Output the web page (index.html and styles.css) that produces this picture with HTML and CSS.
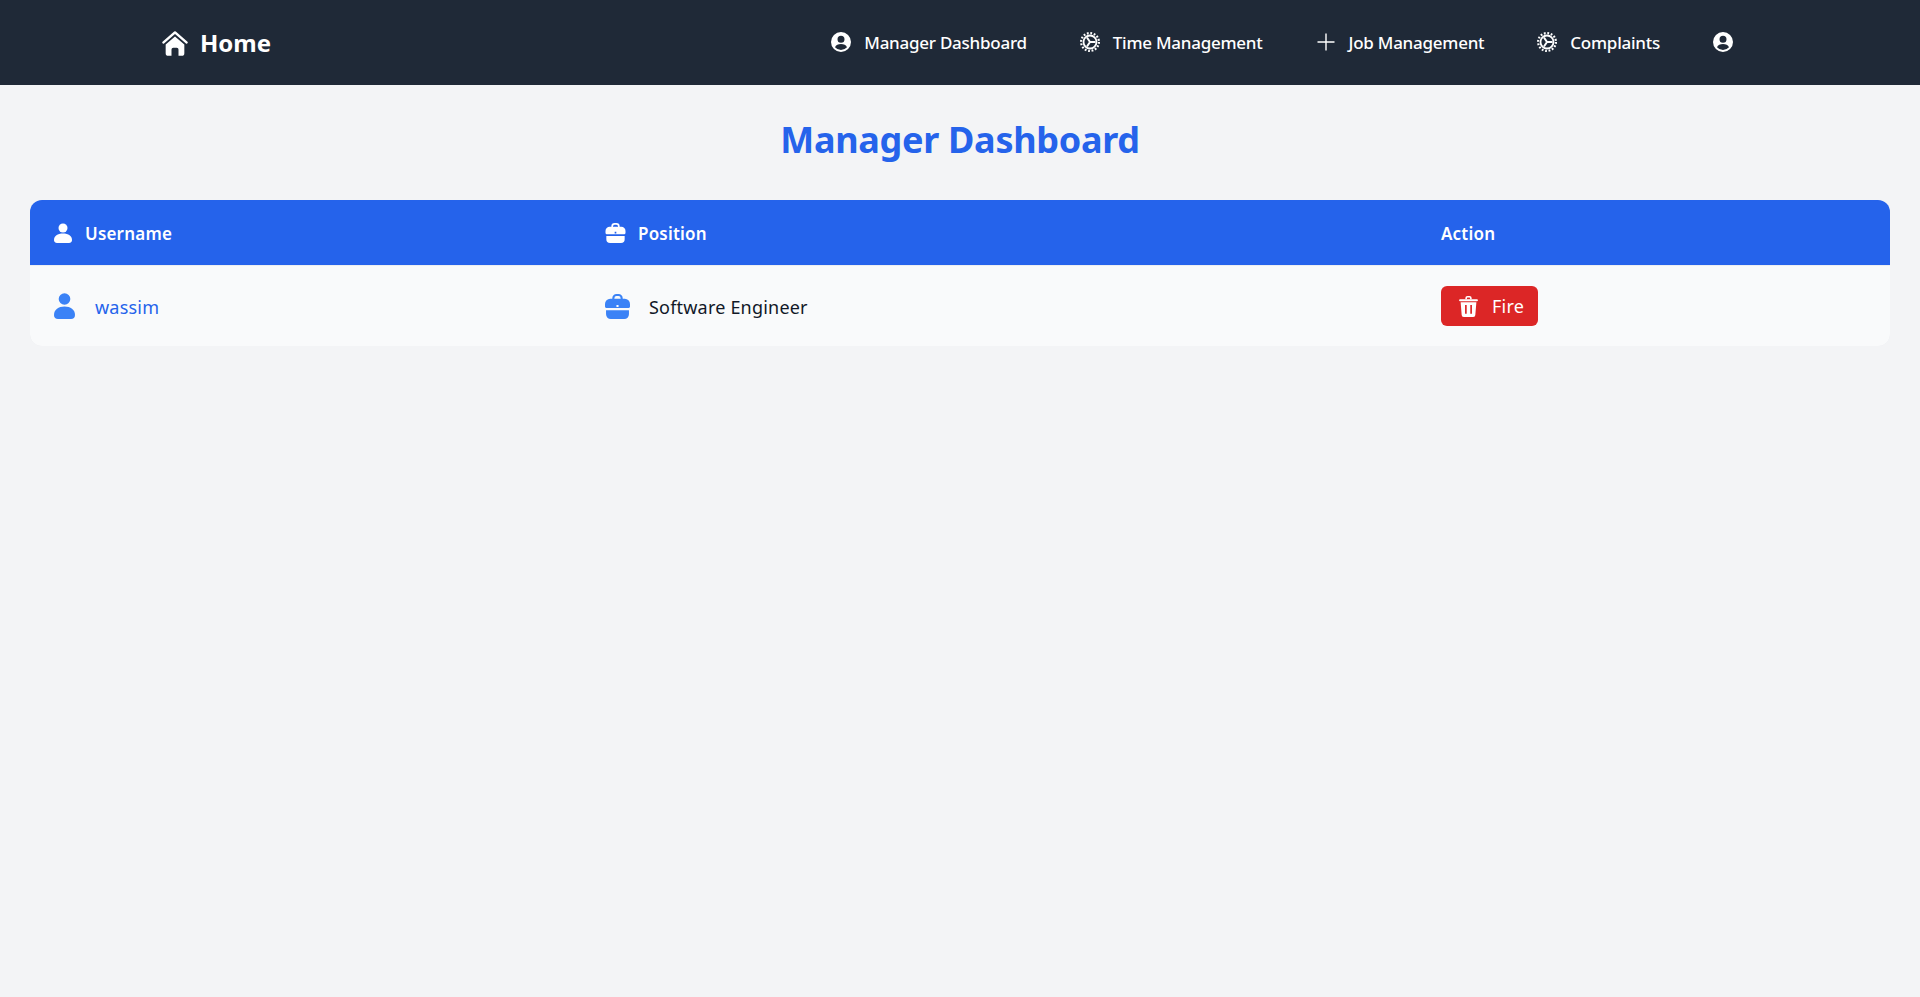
FILE: index.html
```html
<!DOCTYPE html>
<html lang="en">
<head>
    <meta charset="UTF-8">
    <meta name="viewport" content="width=device-width, initial-scale=1.0">
    <title>Manager Dashboard</title>
    <link rel="stylesheet" href="styles.css">
</head>
<body>
    <nav class="navbar">
        <a class="brand" href="#">
            <svg class="brand-icon" viewBox="0 0 24 22"><path d="M12 3.200 2.600 11.400a1 1 0 0 1-1.300-1.500L11.300 1.200a1 1 0 0 1 1.400 0l10 8.700a1 1 0 0 1-1.300 1.500z"/><path d="M12 5.400 4 12.300v7.400A2.300 2.300 0 0 0 6.300 22H9v-5.500a1.500 1.500 0 0 1 1.500-1.500h3a1.500 1.500 0 0 1 1.500 1.500V22h2.700A2.300 2.300 0 0 0 20 19.700v-7.400z"/></svg>
            <span>Home</span>
        </a>
        <div class="nav-links">
            <a class="nav-link" href="#">
                <svg class="nav-icon" viewBox="0 0 20 20"><path fill-rule="evenodd" d="M10 0a10 10 0 1 0 0 20 10 10 0 0 0 0-20zm0 3.800a3.500 3.500 0 1 1 0 7 3.500 3.500 0 0 1 0-7zM4 15.200c.9-2 3.200-3.200 6-3.200s5.100 1.200 6 3.200a8 8 0 0 1-12 0z"/></svg>
                <span>Manager Dashboard</span>
            </a>
            <a class="nav-link" href="#">
                <svg class="nav-icon" viewBox="0 0 20 20"><circle class="gear-teeth" cx="10" cy="10" r="8.900"/><circle class="gear-ring" cx="10" cy="10" r="6.500"/><path class="gear-spoke" d="M10 10h5.500M10 10 7 5.500M10 10l-3 4.500"/></svg>
                <span>Time Management</span>
            </a>
            <a class="nav-link" href="#">
                <svg class="nav-icon" viewBox="0 0 20 20"><path class="plus" d="M10 1.500v17M1.500 10h17"/></svg>
                <span>Job Management</span>
            </a>
            <a class="nav-link" href="#">
                <svg class="nav-icon" viewBox="0 0 20 20"><circle class="gear-teeth" cx="10" cy="10" r="8.900"/><circle class="gear-ring" cx="10" cy="10" r="6.500"/><path class="gear-spoke" d="M10 10h5.500M10 10 7 5.500M10 10l-3 4.500"/></svg>
                <span>Complaints</span>
            </a>
            <a class="nav-link" href="#">
                <svg class="nav-icon" viewBox="0 0 20 20"><path fill-rule="evenodd" d="M10 0a10 10 0 1 0 0 20 10 10 0 0 0 0-20zm0 3.800a3.500 3.500 0 1 1 0 7 3.500 3.500 0 0 1 0-7zM4 15.200c.9-2 3.200-3.200 6-3.200s5.100 1.200 6 3.200a8 8 0 0 1-12 0z"/></svg>
            </a>
        </div>
    </nav>

    <main class="content">
        <h1 class="page-title">Manager Dashboard</h1>
        <table class="staff-table">
            <colgroup>
                <col class="col-user">
                <col class="col-position">
                <col class="col-action">
            </colgroup>
            <thead>
                <tr>
                    <th>
                        <span class="cell-head">
                            <svg class="head-icon" viewBox="0 0 18 20"><circle cx="9" cy="5" r="4.500"/><path d="M0 17c0-4 3.500-6.500 9-6.500s9 2.500 9 6.500c0 1.600-1 3-3 3H3c-2 0-3-1.400-3-3z"/></svg>
                            Username
                        </span>
                    </th>
                    <th>
                        <span class="cell-head">
                            <svg class="head-icon head-icon-case" viewBox="0 0 24 24"><path d="M7 5V4a4 4 0 0 1 4-4h2a4 4 0 0 1 4 4v1h-2V4a2 2 0 0 0-2-2h-2a2 2 0 0 0-2 2v1z"/><path fill-rule="evenodd" d="M5 4.500h14a5 5 0 0 1 5 5V12c0 1-1 1.500-2 1.500H2c-1 0-2-.5-2-1.500V9.500a5 5 0 0 1 5-5zM11 10.500v2h2v-2z"/><path d="M1 15.500h22v4a4.500 4.500 0 0 1-4.500 4.500h-13A4.500 4.500 0 0 1 1 19.500z"/></svg>
                            Position
                        </span>
                    </th>
                    <th>Action</th>
                </tr>
            </thead>
            <tbody>
                <tr>
                    <td>
                        <a class="cell-body user-link" href="#">
                            <svg class="row-icon" viewBox="0 0 21 26"><circle cx="10.500" cy="6" r="5.800"/><path d="M0 22c0-5.500 4.500-8.500 10.500-8.500S21 16.500 21 22c0 2.500-1.500 4-4 4H4c-2.500 0-4-1.500-4-4z"/></svg>
                            wassim
                        </a>
                    </td>
                    <td>
                        <span class="cell-body">
                            <svg class="row-icon row-icon-case" viewBox="0 0 24 24"><path d="M7 5V4a4 4 0 0 1 4-4h2a4 4 0 0 1 4 4v1h-2V4a2 2 0 0 0-2-2h-2a2 2 0 0 0-2 2v1z"/><path fill-rule="evenodd" d="M5 4.500h14a5 5 0 0 1 5 5V12c0 1-1 1.500-2 1.500H2c-1 0-2-.5-2-1.500V9.500a5 5 0 0 1 5-5zM11 10.500v2h2v-2z"/><path d="M1 15.500h22v4a4.500 4.500 0 0 1-4.500 4.500h-13A4.500 4.500 0 0 1 1 19.500z"/></svg>
                            Software Engineer
                        </span>
                    </td>
                    <td>
                        <button class="fire-btn" type="button">
                            <svg class="fire-icon" viewBox="0 0 18 20"><path d="M6 3V2a2 2 0 0 1 2-2h2a2 2 0 0 1 2 2v1h-1.500V2a.5.5 0 0 0-.5-.5H8a.5.5 0 0 0-.5.5v1z"/><rect y="3" width="18" height="2" rx="1"/><path fill-rule="evenodd" d="M1.500 6h15l-1 12a2 2 0 0 1-2 2h-9a2 2 0 0 1-2-2zM5.700 8.500V17h1.600V8.500zM10.700 8.500V17h1.600V8.500z"/></svg>
                            Fire
                        </button>
                    </td>
                </tr>
            </tbody>
        </table>
    </main>
</body>
</html>
```

FILE: styles.css
```css
* {
    box-sizing: border-box;
}
body {
    margin: 0;
    min-height: 100vh;
    background-color: #f3f4f6;
    font-family: "Noto Sans", "Open Sans", sans-serif;
    color: #111827;
}
a {
    color: inherit;
    text-decoration: none;
}
.navbar {
    display: flex;
    align-items: center;
    justify-content: space-between;
    height: 85px;
    padding: 0 187px 0 161px;
    background-color: #1f2937;
    color: #fff;
}
.brand {
    display: flex;
    align-items: center;
    gap: 11px;
    font-size: 24px;
    font-weight: 700;
}
.brand-icon {
    width: 28px;
    height: 26px;
    fill: #fff;
}
.nav-links {
    display: flex;
    align-items: center;
    gap: 53px;
}
.nav-link {
    display: flex;
    align-items: center;
    gap: 13px;
    font-size: 17px;
    font-weight: 500;
    letter-spacing: -0.25px;
}
.nav-icon {
    width: 20px;
    height: 20px;
    fill: #fff;
    margin-top: -2px;
}
.gear-teeth {
    fill: none;
    stroke: #fff;
    stroke-width: 2.2;
    stroke-dasharray: 1.8 1.7;
}
.gear-ring {
    fill: none;
    stroke: #fff;
    stroke-width: 1.8;
}
.gear-spoke {
    fill: none;
    stroke: #fff;
    stroke-width: 2;
}
.plus {
    fill: none;
    stroke: #fff;
    stroke-width: 1.4;
}
.content {
    padding: 0 30px;
}
.page-title {
    margin: 0;
    padding: 28px 0 33px;
    text-align: center;
    font-size: 36px;
    line-height: 54px;
    font-weight: 700;
    letter-spacing: -0.3px;
    color: #2563eb;
}
.staff-table {
    width: 100%;
    table-layout: fixed;
    border-collapse: separate;
    border-spacing: 0;
}
.col-user {
    width: 551px;
}
.col-position {
    width: 836px;
}
.staff-table th {
    height: 65px;
    padding: 2px 24px 0;
    text-align: left;
    font-size: 17px;
    font-weight: 600;
    letter-spacing: 0.2px;
    color: #fff;
    background-color: #2563eb;
}
.staff-table th:first-child {
    border-top-left-radius: 12px;
}
.staff-table th:last-child {
    border-top-right-radius: 12px;
}
.staff-table tbody tr {
    background-color: #e5e7eb;
}
.staff-table td {
    height: 81px;
    padding: 2px 24px 0;
    font-size: 18px;
    letter-spacing: 0.2px;
    background-color: #f9fafb;
    border-top: 1px solid #eceef1;
}
.staff-table td:first-child {
    border-bottom-left-radius: 12px;
}
.staff-table td:last-child {
    border-bottom-right-radius: 12px;
}
.cell-head {
    display: flex;
    align-items: center;
    gap: 13px;
}
.head-icon {
    width: 18px;
    height: 20px;
    fill: #fff;
    margin-top: -2px;
}
.head-icon-case {
    width: 21px;
    margin-right: -1px;
}
.cell-body {
    display: flex;
    align-items: center;
    gap: 20px;
}
.user-link {
    color: #2563eb;
}
.row-icon {
    width: 21px;
    height: 26px;
    fill: #3b82f6;
    margin-top: -2px;
}
.row-icon-case {
    width: 25px;
    height: 25px;
    margin-right: -1px;
}
.fire-btn {
    display: flex;
    align-items: center;
    gap: 14px;
    height: 40px;
    margin-top: -2px;
    padding: 0 14px 0 18px;
    border: none;
    border-radius: 6px;
    background-color: #dc2626;
    color: #fff;
    font-family: inherit;
    font-size: 18px;
    letter-spacing: 0.2px;
    cursor: pointer;
}
.fire-icon {
    width: 19px;
    height: 21px;
    fill: #fff;
}
```
